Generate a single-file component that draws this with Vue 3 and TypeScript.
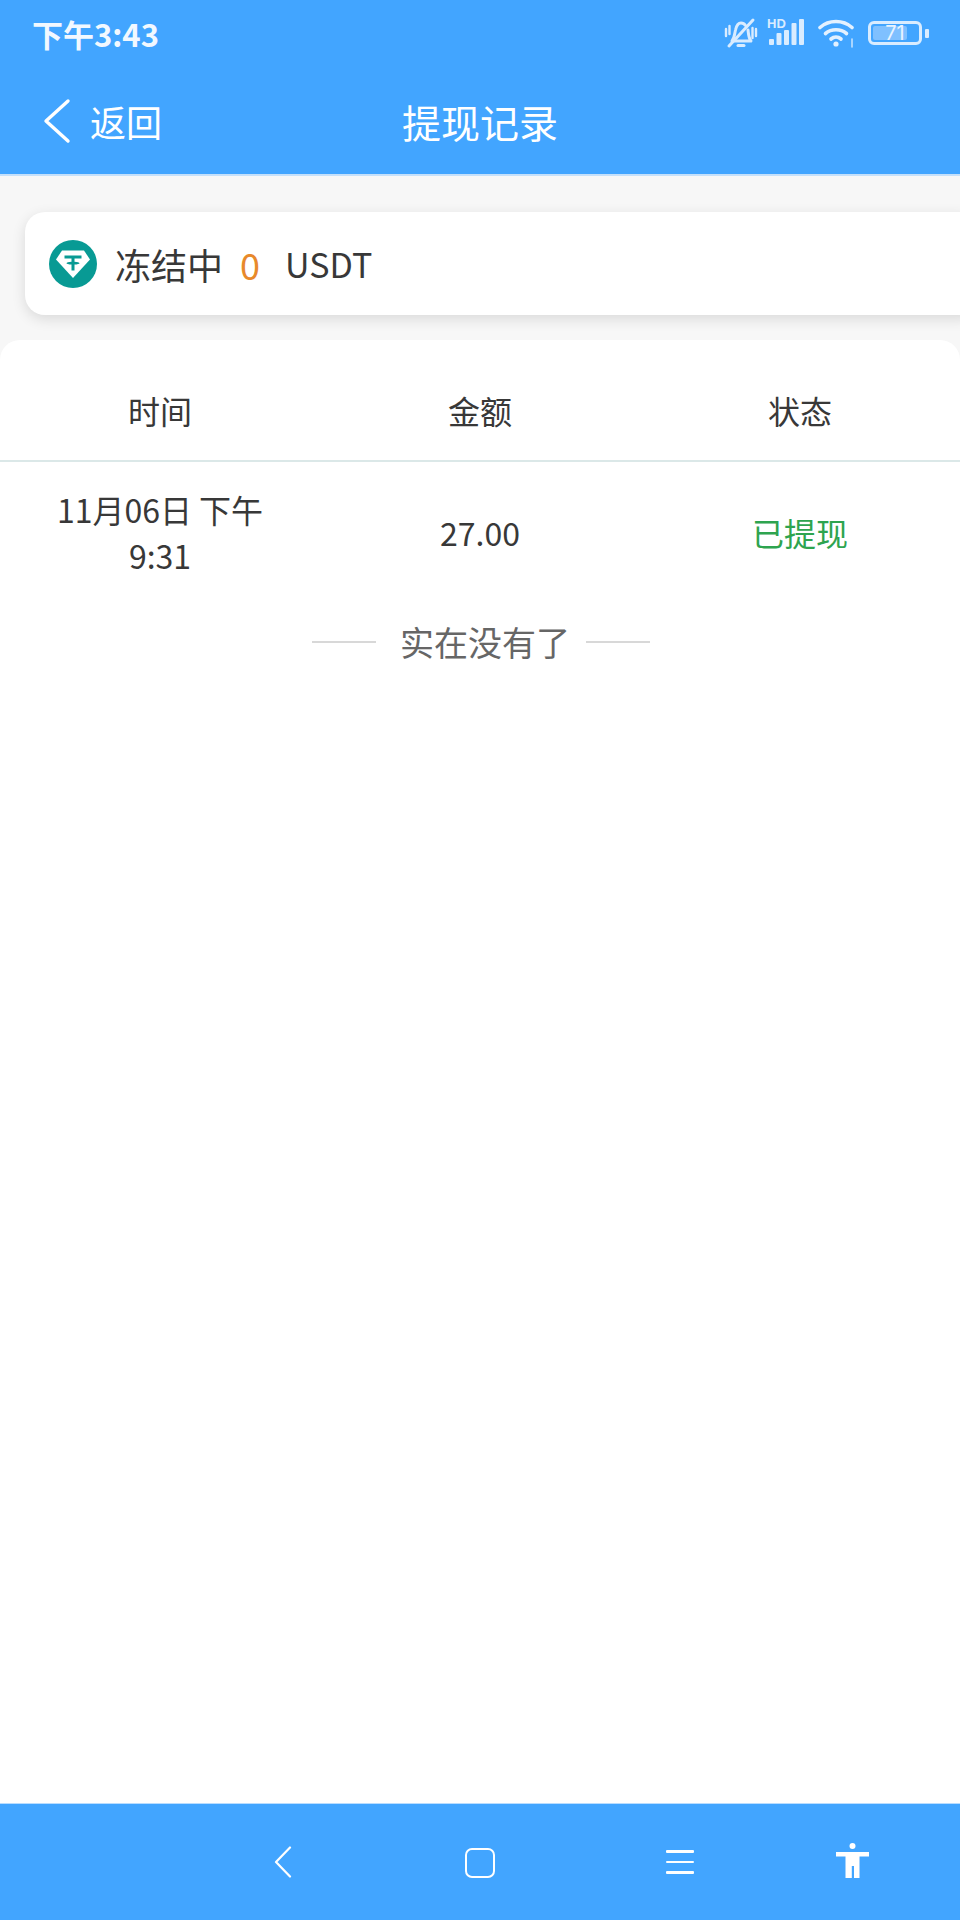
<template>
  <div class="page">
    <div class="top">
      <div class="status-bar">
        <span class="clock">下午3:43</span>
        <div class="status-icons">
          <svg class="ic-bell" width="36" height="32" viewBox="0 0 36 32" fill="none" stroke="#d9ecff" stroke-width="3" stroke-linecap="round" stroke-linejoin="round">
            <path d="M9 24c2.500-3 2.500-7 3.500-11C13.500 8.500 15.500 6 18 6c2 0 3.500 1 4.500 2.500M25 13c.5 4 .5 8 3 11H9" />
            <path d="M15 28.500h6" />
            <path d="M6 29 30 3" />
            <path d="M3 12v7M6.500 9v8M29.500 11v10M33 12v7" stroke-width="2.400" />
          </svg>
          <svg class="ic-signal" width="38" height="36" viewBox="0 -4 38 36">
            <text x="0" y="9" class="hd">HD</text>
            <g fill="#d9ecff">
              <rect x="2" y="20" width="5" height="6" rx="1" />
              <rect x="9.500" y="14" width="5" height="12" rx="1" />
              <rect x="17" y="11" width="5" height="15" rx="1" />
              <rect x="24.500" y="4" width="5" height="22" rx="1" />
              <rect x="32" y="0" width="5" height="26" rx="1" />
            </g>
          </svg>
          <svg class="ic-wifi" width="38" height="30" viewBox="0 0 38 30" fill="none" stroke="#e3f1ff" stroke-width="3.600" stroke-linecap="round">
            <path d="M2 9.500C11 1.500 25 1.500 34 9.500" />
            <path d="M7.500 15.500C13.500 10.500 22.500 10.500 28.500 15.500" />
            <path d="M13 21c3-2.500 7-2.500 10 0" />
            <circle cx="18" cy="26" r="2.600" fill="#e3f1ff" stroke="none" />
            <path d="M34 21v8" stroke-width="1.600" opacity="0.8" />
          </svg>
          <div class="battery">
            <div class="battery__body">
              <div class="battery__fill" :style="{ width: battery + '%' }"></div>
              <span class="battery__num">{{ battery }}</span>
            </div>
            <div class="battery__cap"></div>
          </div>
        </div>
      </div>
      <div class="nav-bar">
        <div class="back">
          <svg width="30" height="46" viewBox="0 0 30 46" fill="none" stroke="#fff" stroke-width="3.400" stroke-linecap="round" stroke-linejoin="round">
            <path d="M26 3 4 23l22 20" />
          </svg>
          <span>返回</span>
        </div>
        <h1 class="nav-title">提现记录</h1>
      </div>
    </div>

    <div class="content">
      <div class="frozen-card">
        <svg class="usdt" width="48" height="48" viewBox="0 0 48 48">
          <circle cx="24" cy="24" r="24" fill="#089a94" />
          <path d="M13 10.500h22l6 9L24 38 7 19.500z" fill="#fff" />
          <path d="M15.500 15.500h17v3h-7v3.300c2.800.2 5 .8 5 1.400s-2.200 1.200-5 1.400v5.900h-3v-5.900c-2.800-.2-5-.8-5-1.400s2.200-1.200 5-1.400v-3.300h-7z" fill="#089a94" />
        </svg>
        <span class="frozen-label">冻结中</span>
        <span class="frozen-num">0</span>
        <span class="frozen-unit">USDT</span>
      </div>

      <div class="record-panel">
        <div class="row row--head">
          <div>时间</div>
          <div>金额</div>
          <div>状态</div>
        </div>
        <div v-for="item in records" :key="item.id" class="row">
          <div class="cell-time">{{ item.time }}</div>
          <div>{{ item.amount }}</div>
          <div class="success">{{ item.status }}</div>
        </div>
        <div class="no-more">
          <i></i>
          <span>实在没有了</span>
          <i></i>
        </div>
      </div>
    </div>

    <div class="sys-bar">
      <svg class="sys-back" width="20" height="32" viewBox="0 0 20 32" fill="none" stroke="#fff" stroke-width="2.200" stroke-linecap="round" stroke-linejoin="round">
        <path d="M17 1.500 3 16l14 14.500" />
      </svg>
      <div class="sys-home"></div>
      <div class="sys-menu"><i></i><i></i><i></i></div>
      <svg class="sys-person" width="33" height="36" viewBox="0 0 33 36" fill="#fff">
        <circle cx="16.500" cy="3" r="3" />
        <path d="M0 9h33v4.500h-9.500V35H18V23h-2.200V35H9.500V13.500H0z" />
      </svg>
    </div>
  </div>
</template>

<script setup lang="ts">
import { ref } from 'vue'

interface WithdrawRecord {
  id: number
  time: string
  amount: string
  status: string
}

const battery = ref(71)

const records = ref<WithdrawRecord[]>([
  { id: 1, time: '11月06日 下午 9:31', amount: '27.00', status: '已提现' },
])
</script>

<style>
html, body { margin: 0; background: #fff; }
</style>

<style scoped>
.page { width: 960px; height: 1920px; display: flex; flex-direction: column; overflow: hidden; font-family: "Noto Sans CJK SC", "Noto Sans", sans-serif; color: #383838; background: #fff; }
.top { height: 174px; background: #42a5ff; border-bottom: 2px solid #c5e0fa; color: #fff; flex-shrink: 0; }
.status-bar { height: 68px; box-sizing: border-box; padding: 0 31px 2px 32px; display: flex; justify-content: space-between; align-items: center; }
.clock { font-size: 31px; font-weight: 700; line-height: 1; color: #f2f8ff; }
.status-icons { display: flex; align-items: center; }
.ic-bell { margin-right: 8px; }
.ic-signal { margin-right: 13px; }
.ic-wifi { margin-right: 12px; }
.hd { font-family: "Liberation Sans", sans-serif; font-size: 13px; font-weight: 700; fill: #d9ecff; }
.battery { display: flex; align-items: center; }
.battery__body { position: relative; box-sizing: border-box; width: 54px; height: 24px; border: 3px solid #d9ecff; border-radius: 6px; display: flex; align-items: center; justify-content: center; }
.battery__fill { position: absolute; left: 2px; top: 2px; bottom: 2px; background: #7fc0ff; border-radius: 2px; }
.battery__num { position: relative; font-family: "Inter", sans-serif; font-size: 20px; line-height: 1; color: #e8f4ff; }
.battery__cap { width: 4px; height: 9px; margin-left: 3px; background: #d9ecff; border-radius: 1px; }
.nav-bar { position: relative; height: 106px; display: flex; align-items: center; justify-content: center; }
.back { position: absolute; left: 42px; top: 30px; display: flex; align-items: center; gap: 18px; font-size: 36px; line-height: 46px; }
.nav-title { margin: 0; font-size: 39px; font-weight: 400; line-height: 1; }
.content { flex: 1; background: #f7f7f7; padding-top: 36px; display: flex; flex-direction: column; }
.frozen-card { height: 103px; margin: 0 -20px 0 25px; padding-left: 24px; background: #fff; border-radius: 20px; box-shadow: 0 4px 14px rgba(0, 0, 0, 0.12); display: flex; align-items: center; font-size: 36px; }
.frozen-label { margin-left: 18px; }
.frozen-num { margin-left: 17px; color: #e8892b; }
.frozen-unit { margin-left: 25px; font-size: 34px; }
.record-panel { flex: 1; margin-top: 25px; background: #fff; border-radius: 20px 20px 0 0; }
.row { display: grid; grid-template-columns: repeat(3, 1fr); align-items: center; padding: 24px 0 12px; text-align: center; font-size: 32px; line-height: 46px; }
.row--head { height: 122px; box-sizing: border-box; padding: 20px 0 0; border-bottom: 2px solid #dbe8e8; }
.cell-time { padding: 0 40px; }
.success { color: #2ea44f; }
.no-more { display: flex; justify-content: center; align-items: center; gap: 24px; margin-top: 27px; padding-left: 2px; font-size: 34px; line-height: 50px; color: #666; }
.no-more i { width: 64px; height: 2px; background: #d8d8d8; }
.no-more i:last-child { margin-left: -8px; }
.sys-bar { position: relative; height: 116px; flex-shrink: 0; background: #42a5ff; border-top: 1px solid #b8dcff; }
.sys-back { position: absolute; left: 273px; top: 42px; }
.sys-home { position: absolute; left: 465px; top: 44px; box-sizing: border-box; width: 30px; height: 30px; border: 2.500px solid #fff; border-radius: 7px; }
.sys-menu { position: absolute; left: 666px; top: 46px; width: 28px; display: flex; flex-direction: column; gap: 8px; }
.sys-menu i { height: 2.500px; background: #fff; border-radius: 1px; }
.sys-person { position: absolute; left: 836px; top: 39px; }
</style>
